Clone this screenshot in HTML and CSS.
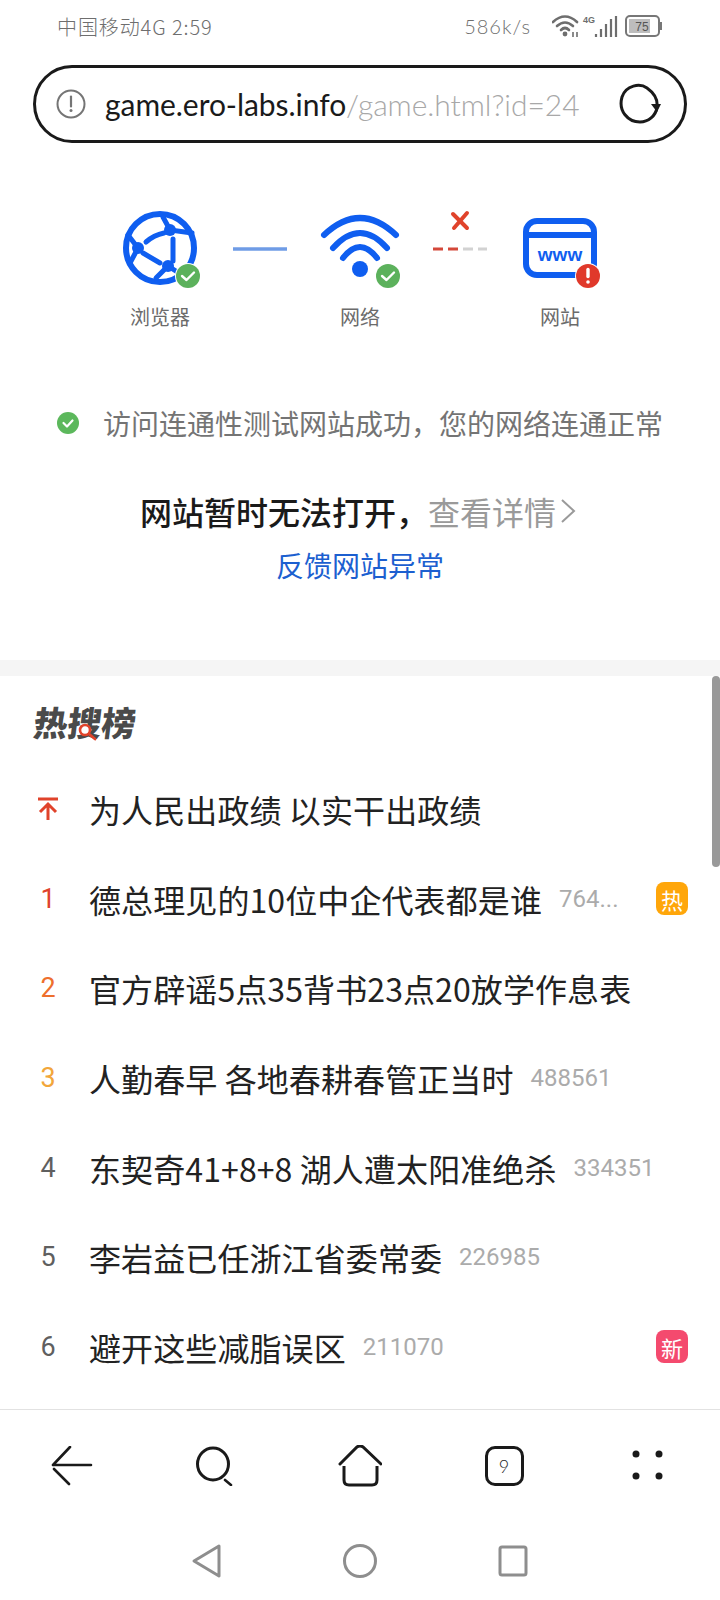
FILE: index.html
```html
<!DOCTYPE html>
<html lang="zh-CN">
<head>
    <meta charset="UTF-8">
    <meta name="viewport" content="width=device-width, initial-scale=1.0">
    <title>网站暂时无法打开</title>
    <link rel="stylesheet" href="styles.css">
</head>
<body>
    <div class="status-bar">
        <span class="carrier">中国移动4G 2:59</span>
        <div class="status-right">
            <span class="speed">586k/s</span>
            <svg class="status-icons" width="110" height="24" viewBox="0 0 110 24">
                <g fill="none" stroke="#6e6e6e" stroke-width="2.6" stroke-linecap="round">
                    <path d="M1 8 Q13 -3 25 8"/>
                    <path d="M5 12 Q13 5 21 12"/>
                    <path d="M9 16 Q13 12 17 16"/>
                </g>
                <circle cx="13" cy="20" r="2.4" fill="#6e6e6e"/>
                <path d="M21 18v5M25 18v5" stroke="#6e6e6e" stroke-width="1.6"/>
                <text x="31" y="9" class="tiny-4g">4G</text>
                <path d="M44 20v3M49 15v8M54 10v13M59 5v18M64 2v21" stroke="#6e6e6e" stroke-width="2.2"/>
                <rect x="74" y="2" width="33" height="20" rx="4" fill="none" stroke="#777" stroke-width="2"/>
                <rect x="77" y="5" width="21" height="14" fill="#bdbdbd"/>
                <text x="90" y="17" class="batt-num" text-anchor="middle">75</text>
                <path d="M109 8v8" stroke="#777" stroke-width="2"/>
            </svg>
        </div>
    </div>

    <div class="url-bar">
        <svg width="30" height="30" viewBox="0 0 30 30">
            <circle cx="15" cy="15" r="13.5" fill="none" stroke="#757575" stroke-width="2"/>
            <path d="M15 7.5v10" stroke="#757575" stroke-width="2.2" stroke-linecap="round"/>
            <circle cx="15" cy="21.5" r="1.5" fill="#757575"/>
        </svg>
        <div class="url-text">game.ero-labs.info<span class="url-path">/game.html?id=24</span></div>
        <svg class="reload" width="44" height="42" viewBox="0 0 44 42">
            <path d="M29 5 C22 0 8 2 4 14 C0 28 10 39 22 39 C30 39 38 33 39 24 C40 16 36 10 29 5" fill="none" stroke="#1a1a1a" stroke-width="3"/>
            <path d="M33 21 L43 21 L39 29 Z" fill="#1a1a1a"/>
        </svg>
    </div>

    <div class="diagram">
        <div class="node">
            <svg width="100" height="86" viewBox="0 0 100 86">
                <g fill="none" stroke="#0f5ef0" stroke-linecap="round">
                    <circle cx="50" cy="43" r="34" stroke-width="6"/>
                    <g stroke-width="5">
                        <path d="M53 12 L60 25 L82 28"/>
                        <path d="M36 37 Q44 30 54 28"/>
                        <path d="M18 30 L28 43 L20 58"/>
                        <path d="M33 48 L50 58"/>
                        <path d="M63 34 L63 56"/>
                        <path d="M46 73 L58 61 L72 70"/>
                    </g>
                </g>
                <circle cx="60" cy="25" r="6" fill="#0f5ef0"/>
                <circle cx="28" cy="43" r="6" fill="#0f5ef0"/>
                <circle cx="58" cy="61" r="6" fill="#0f5ef0"/>
                <circle cx="78" cy="71" r="13" fill="#fff"/>
                <circle cx="78" cy="71" r="12" fill="#5cb15c"/>
                <path d="M72 71 L76.500 75 L84 67.500" fill="none" stroke="#fff" stroke-width="2.4" stroke-linecap="round" stroke-linejoin="round"/>
            </svg>
            <span class="node-label">浏览器</span>
        </div>
        <div class="link-line">
            <svg width="100" height="86" viewBox="0 0 100 86">
                <path d="M23 44H77" stroke="#6f9ce6" stroke-width="3.500"/>
            </svg>
        </div>
        <div class="node">
            <svg width="100" height="86" viewBox="0 0 100 86">
                <g fill="none" stroke="#0f5ef0" stroke-width="6" stroke-linecap="round">
                    <path d="M14 30 Q50 -4 86 30"/>
                    <path d="M23 43 Q50 13 77 43"/>
                    <path d="M33 53 Q50 31 67 53"/>
                </g>
                <circle cx="50" cy="64" r="8" fill="#0f5ef0"/>
                <circle cx="78" cy="71" r="13" fill="#fff"/>
                <circle cx="78" cy="71" r="12" fill="#5cb15c"/>
                <path d="M72 71 L76.500 75 L84 67.500" fill="none" stroke="#fff" stroke-width="2.4" stroke-linecap="round" stroke-linejoin="round"/>
            </svg>
            <span class="node-label">网络</span>
        </div>
        <div class="link-line">
            <svg width="100" height="86" viewBox="0 0 100 86">
                <path d="M43 9 L57 23 M57 8 L44 23" stroke="#e0432b" stroke-width="4" stroke-linecap="round"/>
                <path d="M23 44H33M38 44H48" stroke="#d4483a" stroke-width="3"/>
                <path d="M53 44H63M68 44H77" stroke="#d2d2d2" stroke-width="3"/>
            </svg>
        </div>
        <div class="node">
            <svg width="100" height="86" viewBox="0 0 100 86">
                <rect x="16" y="16" width="68" height="54" rx="11" fill="none" stroke="#0f5ef0" stroke-width="6"/>
                <path d="M16 30H84" stroke="#0f5ef0" stroke-width="6"/>
                <text x="50" y="56" class="www" text-anchor="middle">www</text>
                <circle cx="78" cy="71" r="13" fill="#fff"/>
                <circle cx="78" cy="71" r="12" fill="#e0392b"/>
                <path d="M78 64.500v7" stroke="#fff" stroke-width="3.400" stroke-linecap="round"/>
                <circle cx="78" cy="77" r="1.800" fill="#fff"/>
            </svg>
            <span class="node-label">网站</span>
        </div>
    </div>

    <div class="check-line">
        <svg width="24" height="24" viewBox="0 0 24 24">
            <circle cx="12" cy="12" r="11" fill="#5cb85c"/>
            <path d="M7.500 12 L11 15.500 L16.500 9.500" fill="none" stroke="#fff" stroke-width="2.200" stroke-linecap="round" stroke-linejoin="round"/>
        </svg>
        <span>访问连通性测试网站成功，您的网络连通正常</span>
    </div>

    <div class="headline">网站暂时无法打开，<span class="detail">查看详情</span><svg class="chevron" width="16" height="26" viewBox="0 0 16 26"><path d="M2 2 L14 13 L2 24" fill="none" stroke="#9a9a9a" stroke-width="2"/></svg></div>
    <div class="feedback">反馈网站异常</div>

    <div class="band"></div>

    <div class="hot">
        <div class="scrollbar"></div>
        <div class="hot-title">
            <h2>热搜榜</h2>
            <svg class="hot-lens" width="22" height="18" viewBox="0 0 22 18">
                <circle cx="8" cy="7" r="5" fill="#fff" stroke="#e0432b" stroke-width="2.600"/>
                <path d="M12 11 L18 16" stroke="#e0432b" stroke-width="2.800" stroke-linecap="round"/>
            </svg>
        </div>
        <div class="row">
            <span class="rank">
                <svg width="20" height="24" viewBox="0 0 20 24">
                    <path d="M0 2H20M10 23V8M2 15 L10 7 L18 15" fill="none" stroke="#e0432b" stroke-width="3"/>
                </svg>
            </span>
            <span class="title">为人民出政绩 以实干出政绩</span>
        </div>
        <div class="row">
            <span class="rank r1">1</span>
            <span class="title">德总理见的10位中企代表都是谁</span>
            <span class="count">764...</span>
            <span class="badge badge-hot">热</span>
        </div>
        <div class="row">
            <span class="rank r2">2</span>
            <span class="title">官方辟谣5点35背书23点20放学作息表</span>
        </div>
        <div class="row">
            <span class="rank r3">3</span>
            <span class="title">人勤春早 各地春耕春管正当时</span>
            <span class="count">488561</span>
        </div>
        <div class="row">
            <span class="rank">4</span>
            <span class="title">东契奇41+8+8 湖人遭太阳准绝杀</span>
            <span class="count">334351</span>
        </div>
        <div class="row">
            <span class="rank">5</span>
            <span class="title">李岩益已任浙江省委常委</span>
            <span class="count">226985</span>
        </div>
        <div class="row">
            <span class="rank">6</span>
            <span class="title">避开这些减脂误区</span>
            <span class="count">211070</span>
            <span class="badge badge-new">新</span>
        </div>
    </div>

    <div class="toolbar">
        <svg width="44" height="40" viewBox="0 0 44 40">
            <path d="M3 19H41M20 1 L3 19M4 23 L19 38" fill="none" stroke="#1a1a1a" stroke-width="2.600" stroke-linecap="round"/>
        </svg>
        <svg width="44" height="40" viewBox="0 0 44 40">
            <ellipse cx="19" cy="18" rx="15.500" ry="16" fill="none" stroke="#1a1a1a" stroke-width="3"/>
            <path d="M31 34 L37 39" stroke="#1a1a1a" stroke-width="2.600" stroke-linecap="round"/>
        </svg>
        <svg width="44" height="42" viewBox="0 0 44 42">
            <path d="M2 19 L19 2 Q22 0 25 2 L43 19" fill="none" stroke="#1a1a1a" stroke-width="3" stroke-linecap="round"/>
            <path d="M6 21V35 Q6 40 11 40H34 Q39 40 39 35V21" fill="none" stroke="#1a1a1a" stroke-width="3"/>
        </svg>
        <div class="tabs">9</div>
        <svg width="44" height="40" viewBox="0 0 44 40">
            <circle cx="10" cy="8" r="3.500" fill="#1a1a1a"/>
            <circle cx="33" cy="8" r="3.500" fill="#1a1a1a"/>
            <circle cx="10" cy="30" r="3.500" fill="#1a1a1a"/>
            <circle cx="33" cy="30" r="3.500" fill="#1a1a1a"/>
        </svg>
    </div>

    <div class="system-nav">
        <svg width="32" height="36" viewBox="0 0 32 36">
            <path d="M28 3 L3 18 L28 33 Z" fill="none" stroke="#8e8e8e" stroke-width="3" stroke-linejoin="round"/>
        </svg>
        <svg width="36" height="36" viewBox="0 0 36 36">
            <circle cx="18" cy="18" r="15.500" fill="none" stroke="#8e8e8e" stroke-width="3"/>
        </svg>
        <svg width="32" height="36" viewBox="0 0 32 36">
            <rect x="3" y="4" width="26" height="28" rx="2" fill="none" stroke="#8e8e8e" stroke-width="3"/>
        </svg>
    </div>
</body>
</html>
```

FILE: styles.css
```css
* {
    box-sizing: border-box;
}
body {
    margin: 0;
    width: 720px;
    height: 1600px;
    overflow: hidden;
    display: flex;
    flex-direction: column;
    background-color: #fff;
    font-family: "Noto Sans CJK SC", "Noto Sans", sans-serif;
    color: #1f1f1f;
}

/* status bar */
.status-bar {
    height: 52px;
    padding: 0 58px 0 57px;
    display: flex;
    align-items: center;
    justify-content: space-between;
    color: #6e6e6e;
}
.carrier {
    font-size: 20px;
    font-weight: 300;
    letter-spacing: 0.9px;
}
.status-right {
    display: flex;
    align-items: center;
    gap: 21px;
}
.speed {
    font-family: "Lato", sans-serif;
    font-size: 20px;
    font-weight: 300;
    letter-spacing: 1px;
}
.tiny-4g {
    font: bold 9px "Liberation Sans", sans-serif;
    fill: #6e6e6e;
}
.batt-num {
    font: 12px "Liberation Sans", sans-serif;
    fill: #555;
}

/* address bar */
.url-bar {
    margin: 13px 33px 0;
    height: 78px;
    border: 3.500px solid #1a1a1a;
    border-radius: 39px;
    padding: 0 22px 0 20px;
    display: flex;
    align-items: center;
}
.url-text {
    margin-left: 19px;
    flex: 1;
    font-family: "Lato", sans-serif;
    font-size: 30px;
    letter-spacing: -0.05px;
    color: #1a1a1a;
    white-space: nowrap;
}
.url-path {
    color: #a8a8a8;
    font-weight: 300;
}

/* connectivity diagram */
.diagram {
    margin-top: 62px;
    padding-left: 110px;
    display: flex;
    align-items: flex-start;
}
.node {
    width: 100px;
    display: flex;
    flex-direction: column;
    align-items: center;
}
.node svg,
.link-line svg {
    display: block;
}
.node-label {
    margin-top: 12px;
    font-size: 20px;
    line-height: 28px;
    color: #6b6b6b;
}
.link-line {
    width: 100px;
}
.www {
    font: bold 19px "Liberation Sans", sans-serif;
    fill: #0f5ef0;
}

.check-line {
    margin-top: 72px;
    padding-left: 56px;
    height: 40px;
    display: flex;
    align-items: center;
    gap: 23px;
    font-size: 28px;
    color: #747474;
}
.headline {
    margin-top: 46px;
    height: 44px;
    display: flex;
    align-items: center;
    justify-content: center;
    font-size: 32px;
    font-weight: 500;
    color: #1a1a1a;
    padding-right: 4px;
}
.detail {
    color: #9a9a9a;
    font-weight: 400;
}
.chevron {
    margin-left: 4px;
}
.feedback {
    margin-top: 12px;
    line-height: 40px;
    text-align: center;
    font-size: 28px;
    color: #1c5fd0;
}
.band {
    margin-top: 75px;
    height: 16px;
    background-color: #f5f5f5;
}

/* hot search list */
.hot {
    position: relative;
    flex: 1;
}
.scrollbar {
    position: absolute;
    top: 0;
    right: 0;
    width: 8px;
    height: 191px;
    border-radius: 4px;
    background-color: #999;
}
.hot-title {
    position: relative;
    height: 88px;
    padding: 26px 0 0 34px;
}
.hot-title h2 {
    display: inline-block;
    margin: 0;
    font-size: 34px;
    line-height: 40px;
    font-weight: 900;
    transform: skewX(-7deg);
    color: #4a4a4a;
}
.hot-lens {
    position: absolute;
    left: 77px;
    top: 47px;
}
.row {
    height: 89.700px;
    padding-right: 32px;
    display: flex;
    align-items: center;
}
.rank {
    width: 89px;
    padding: 0 27px 0 34px;
    text-align: center;
    font-family: "Roboto", sans-serif;
    font-size: 27px;
    color: #5f5f5f;
}
.rank svg {
    display: block;
    margin: 0 auto;
}
.rank.r1 {
    color: #e0432b;
}
.rank.r2 {
    color: #ee6f2d;
}
.rank.r3 {
    color: #f2a63a;
}
.title {
    font-size: 32px;
    letter-spacing: 0.1px;
    color: #222;
    white-space: nowrap;
}
.count {
    margin-left: 17px;
    font-family: "Roboto", sans-serif;
    font-size: 24px;
    color: #ababab;
}
.badge {
    margin-left: auto;
    width: 32px;
    height: 33px;
    border-radius: 8px;
    display: flex;
    align-items: center;
    justify-content: center;
    font-size: 22px;
    color: #fff;
}
.badge-hot {
    background-color: #ffa60a;
}
.badge-new {
    background-color: #f44a6e;
}

/* bottom bars */
.toolbar {
    height: 113px;
    border-top: 1px solid #e2e2e2;
    display: grid;
    grid-template-columns: repeat(5, 144px);
    align-items: center;
    justify-items: center;
}
.tabs {
    width: 39px;
    height: 40px;
    border: 3px solid #1a1a1a;
    border-radius: 10px;
    display: flex;
    align-items: center;
    justify-content: center;
    font-family: "Lato", sans-serif;
    font-size: 18px;
    font-weight: 300;
}
.system-nav {
    height: 78px;
    padding-left: 191px;
    padding-right: 191px;
    display: flex;
    align-items: center;
    justify-content: space-between;
}
```
